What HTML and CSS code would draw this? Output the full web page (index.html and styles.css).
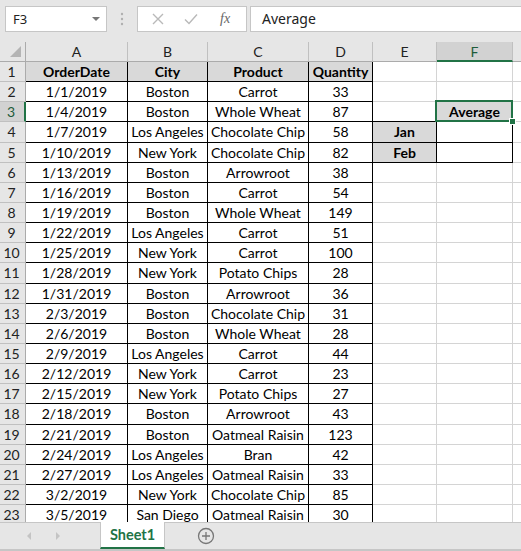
FILE: index.html
```html
<!DOCTYPE html>
<html lang="en">
<head>
<meta charset="UTF-8">
<meta name="viewport" content="width=device-width, initial-scale=1.0">
<title>Book1 - Excel</title>
<link rel="stylesheet" href="styles.css">
</head>
<body>

<div class="toolbar">
  <div class="namebox">
    <span>F3</span>
    <span class="caret"></span>
  </div>
  <div class="dots">
    <svg width="4" height="14" viewBox="0 0 4 14"><circle cx="2" cy="2" r="1.2"/><circle cx="2" cy="7" r="1.2"/><circle cx="2" cy="12" r="1.2"/></svg>
  </div>
  <div class="fxbox">
    <svg class="ico" width="12" height="12" viewBox="0 0 12 12"><path d="M1 1 L11 11 M11 1 L1 11"/></svg>
    <svg class="ico" width="14" height="12" viewBox="0 0 14 12"><path d="M1 6.5 L5 10.5 L13 1.5"/></svg>
    <span class="fx">fx</span>
  </div>
  <div class="formula">Average</div>
</div>

<div class="sheet" id="sheet">
  <div class="corner"><span class="tri"></span></div>
  <div class="ch">A</div>
  <div class="ch">B</div>
  <div class="ch">C</div>
  <div class="ch">D</div>
  <div class="ch">E</div>
  <div class="ch ch-sel">F</div>
  <div class="ch"></div>
</div>

<div class="tabs">
  <span class="arrow arrow-left"></span>
  <span class="arrow arrow-right"></span>
  <div class="tab">Sheet1</div>
  <svg class="plus" width="18" height="18" viewBox="0 0 18 18"><circle cx="9" cy="9" r="7.5"/><path d="M9 5 V13 M5 9 H13"/></svg>
</div>

<script>
// data of A1:D23
const rows = [
  ["1/1/2019", "Boston", "Carrot", 33],
  ["1/4/2019", "Boston", "Whole Wheat", 87],
  ["1/7/2019", "Los Angeles", "Chocolate Chip", 58],
  ["1/10/2019", "New York", "Chocolate Chip", 82],
  ["1/13/2019", "Boston", "Arrowroot", 38],
  ["1/16/2019", "Boston", "Carrot", 54],
  ["1/19/2019", "Boston", "Whole Wheat", 149],
  ["1/22/2019", "Los Angeles", "Carrot", 51],
  ["1/25/2019", "New York", "Carrot", 100],
  ["1/28/2019", "New York", "Potato Chips", 28],
  ["1/31/2019", "Boston", "Arrowroot", 36],
  ["2/3/2019", "Boston", "Chocolate Chip", 31],
  ["2/6/2019", "Boston", "Whole Wheat", 28],
  ["2/9/2019", "Los Angeles", "Carrot", 44],
  ["2/12/2019", "New York", "Carrot", 23],
  ["2/15/2019", "New York", "Potato Chips", 27],
  ["2/18/2019", "Boston", "Arrowroot", 43],
  ["2/21/2019", "Boston", "Oatmeal Raisin", 123],
  ["2/24/2019", "Los Angeles", "Bran", 42],
  ["2/27/2019", "Los Angeles", "Oatmeal Raisin", 33],
  ["3/2/2019", "New York", "Chocolate Chip", 85],
  ["3/5/2019", "San Diego", "Oatmeal Raisin", 30]
];

function cell(text, cls) {
  return `<div class="c ${cls || ""}">${text}</div>`;
}

let html = "";

// row 1: table headings
html += `<div class="rh">1</div>`;
["OrderDate", "City", "Product", "Quantity"].forEach(t => html += cell(t, "b head"));
html += cell("") + cell("") + cell("");

rows.forEach((r, i) => {
  const n = i + 2;
  html += `<div class="rh ${n === 3 ? "rh-sel" : ""}">${n}</div>`;
  r.forEach(v => html += cell(v, "b"));

  if (n === 3) {
    html += cell("", "bb") + cell("Average", "b head sel") + cell("");
  } else if (n === 4) {
    html += cell("Jan", "b head") + cell("", "b") + cell("");
  } else if (n === 5) {
    html += cell("Feb", "b head") + cell("", "b") + cell("");
  } else {
    html += cell("") + cell("") + cell("");
  }
});

document.getElementById("sheet").insertAdjacentHTML("beforeend", html);
</script>

</body>
</html>
```

FILE: styles.css
```css
body {
  margin: 0;
  width: 521px;
  height: 551px;
  overflow: hidden;
  background: #ffffff;
  font-family: Lato, "Open Sans", sans-serif;
  color: #000;
}

/* formula bar */
.toolbar {
  height: 42px;
  box-sizing: border-box;
  padding-top: 6px;
  background: #e6e6e6;
  display: flex;
  align-items: flex-start;
}

.namebox {
  margin-left: 5px;
  width: 102px;
  height: 26px;
  box-sizing: border-box;
  border: 1px solid #c6c6c6;
  background: #fff;
  display: flex;
  align-items: center;
  justify-content: space-between;
  padding: 0 6px 0 7px;
  font-family: "Noto Sans", sans-serif;
  font-size: 13px;
  color: #222;
}

.caret {
  width: 0;
  height: 0;
  border-left: 4px solid transparent;
  border-right: 4px solid transparent;
  border-top: 4px solid #777;
}

.dots {
  width: 30px;
  height: 26px;
  display: flex;
  align-items: center;
  justify-content: center;
}

.dots svg {
  fill: #b0b0b0;
}

.fxbox {
  width: 110px;
  height: 26px;
  box-sizing: border-box;
  border: 1px solid #c6c6c6;
  background: #fff;
  display: flex;
  align-items: center;
  padding-left: 14px;
  gap: 20px;
}

.ico {
  fill: none;
  stroke: #b9b9b9;
  stroke-width: 1.4;
}

.fx {
  font-family: "Liberation Serif", serif;
  font-style: italic;
  font-size: 14px;
  color: #666;
  margin-left: 2px;
}

.formula {
  margin-left: 3px;
  flex: 1;
  height: 26px;
  box-sizing: border-box;
  border: 1px solid #c6c6c6;
  border-right: none;
  background: #fff;
  padding-left: 11px;
  font-family: "Noto Sans", sans-serif;
  font-size: 14px;
  line-height: 24px;
  color: #222;
}

/* grid */
.sheet {
  height: 480px;
  overflow: hidden;
  display: grid;
  grid-template-columns: 26px 102px 80px 101px 64px 64px 76px 30px;
  grid-template-rows: 20px;
  grid-auto-rows: 20.15px;
  font-size: 14px;
}

.corner {
  background: #e6e6e6;
  border-right: 1px solid #ababab;
  border-bottom: 1px solid #ababab;
  position: relative;
}

.tri {
  position: absolute;
  right: 4px;
  bottom: 4px;
  width: 0;
  height: 0;
  border-left: 11px solid transparent;
  border-bottom: 11px solid #b4b4b4;
}

.ch {
  background: #e6e6e6;
  border-right: 1px solid #c0c0c0;
  border-bottom: 1px solid #ababab;
  text-align: center;
  font-size: 14px;
  line-height: 20px;
  color: #222;
}

.ch-sel {
  background: #d2d2d2;
  color: #1e5c3a;
  border-bottom: 2px solid #217346;
}

.rh {
  background: #e6e6e6;
  border-right: 1px solid #ababab;
  border-bottom: 1px solid #c0c0c0;
  text-align: center;
  font-size: 14px;
  line-height: 20px;
  color: #222;
  padding-right: 2px;
}

.rh-sel {
  background: #d2d2d2;
  color: #1e5c3a;
  border-right: 2px solid #217346;
}

.c {
  box-sizing: border-box;
  border-right: 1px solid #d4d4d4;
  border-bottom: 1px solid #d4d4d4;
  text-align: center;
  line-height: 20px;
  white-space: nowrap;
  overflow: hidden;
}

.c.b {
  border-right-color: #000;
  border-bottom-color: #000;
}

.c.bb {
  border-bottom-color: #000;
}

.head {
  background: #d9d9d9;
  font-weight: bold;
}

.sel {
  position: relative;
  overflow: visible;
}

.sel::after {
  content: "";
  position: absolute;
  left: -2px;
  top: -2px;
  right: -1px;
  bottom: -1px;
  border: 2px solid #217346;
}

.sel::before {
  content: "";
  position: absolute;
  right: -4px;
  bottom: -4px;
  width: 5px;
  height: 5px;
  background: #217346;
  border: 1px solid #fff;
  z-index: 1;
}

/* sheet tabs */
.tabs {
  height: 29px;
  box-sizing: border-box;
  background: #e6e6e6;
  border-top: 1px solid #c6c6c6;
  border-bottom: 2px solid #c6c6c6;
  display: flex;
  align-items: stretch;
}

.arrow {
  width: 0;
  height: 0;
  align-self: center;
  border-top: 4px solid transparent;
  border-bottom: 4px solid transparent;
}

.arrow-left {
  margin-left: 27px;
  border-right: 4px solid #c4c4c4;
}

.arrow-right {
  margin-left: 25px;
  border-left: 4px solid #c4c4c4;
}

.tab {
  margin-left: 40px;
  width: 65px;
  box-sizing: border-box;
  margin-top: -1px;
  background: #fff;
  border-left: 1px solid #c6c6c6;
  border-right: 1px solid #c6c6c6;
  border-bottom: 2px solid #217346;
  color: #217346;
  font-weight: bold;
  font-size: 14.5px;
  text-align: center;
  line-height: 26px;
}

.plus {
  align-self: center;
  margin-left: 32px;
  fill: none;
  stroke: #777;
  stroke-width: 1.3;
}
```
